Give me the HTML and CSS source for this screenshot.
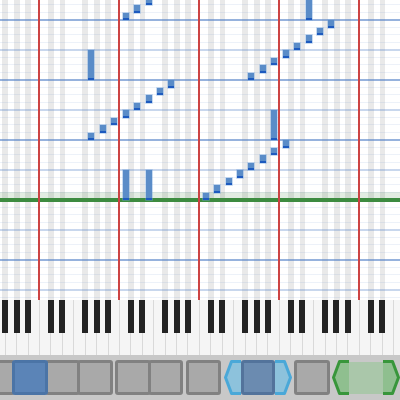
FILE: index.html
```html
<!DOCTYPE html>
<html lang="en">
<head>
  <meta charset="UTF-8">
  <meta name="viewport" content="width=device-width, initial-scale=1.0">
  <title>Piano Roll</title>
  <link rel="stylesheet" href="styles.css">
</head>
<body>
  <div class="roll" id="roll">
    <div class="playhead"></div>
  </div>

  <div class="keyboard">
    <div class="keys" id="keys"></div>
  </div>

  <div class="toolbar">
    <div class="tools">
      <div class="group">
        <div class="btn"></div>
        <div class="btn active"></div>
        <div class="btn"></div>
        <div class="btn"></div>
      </div>
      <div class="group">
        <div class="btn"></div>
        <div class="btn"></div>
      </div>
      <div class="group">
        <div class="btn"></div>
      </div>
      <div class="range blue">
        <svg class="handle" width="17" height="35" viewBox="0 0 17 35"><path d="M17 1.5H7.5L1.5 17.5L7.5 33.5H17"/></svg>
        <div class="btn selected"></div>
        <svg class="handle" width="17" height="35" viewBox="0 0 17 35"><path d="M0 1.5H9.5L15.5 17.5L9.5 33.5H0"/></svg>
      </div>
      <div class="group">
        <div class="btn"></div>
      </div>
      <div class="range green">
        <svg class="handle" width="17" height="35" viewBox="0 0 17 35"><path d="M17 1.5H7.5L1.5 17.5L7.5 33.5H17"/></svg>
        <div class="loop"></div>
        <svg class="handle" width="17" height="35" viewBox="0 0 17 35"><path d="M0 1.5H9.5L15.5 17.5L9.5 33.5H0"/></svg>
      </div>
    </div>
  </div>

  <script>
    const W = 80 / 7;   // white key width
    const C0 = 40;      // x of the first C on screen

    // keyboard: starts on the F below C0
    const keys = document.getElementById('keys');
    for (let j = -4; j < 32; j++) {
      const step = ((j % 7) + 7) % 7;
      const key = document.createElement('div');
      key.className = [0, 1, 3, 4, 5].includes(step) ? 'key sharp' : 'key';
      keys.appendChild(key);
    }

    // [white key from C0, top, length]
    const notes = [
      [7, 12.5], [8, 5], [9, -2.5],
      [4, 50, 30],
      [4, 132.5], [5, 125], [6, 117.5], [7, 110], [8, 102.5], [9, 95], [10, 87.5], [11, 80],
      [18, 72.5], [19, 65], [20, 57.5], [21, 50], [22, 42.5], [23, 35], [24, 27.5], [25, 20],
      [23, -10, 30],
      [20, 110, 30],
      [14, 192.5], [15, 185], [16, 177.5], [17, 170], [18, 162.5], [19, 155], [20, 147.5], [21, 140],
      [7, 170, 30], [9, 170, 30]
    ];

    const roll = document.getElementById('roll');
    notes.forEach(([k, top, len = 7.5]) => {
      const note = document.createElement('div');
      note.className = 'note';
      note.style.left = (C0 + k * W + 2.7) + 'px';
      note.style.top = top + 'px';
      note.style.height = len + 'px';
      roll.appendChild(note);
    });
  </script>
</body>
</html>
```

FILE: styles.css
```css
body {
  margin: 0;
  width: 400px;
  height: 400px;
  overflow: hidden;
  font-family: "Liberation Sans", sans-serif;
  background-color: #c8c8c8;
}

/* note grid */
.roll {
  position: relative;
  height: 300px;
  overflow: hidden;
  background-color: #fff;
  background-image:
    linear-gradient(to bottom,
      rgba(74, 122, 196, 0.58) 0 2px,
      transparent 2px 8px,
      rgba(74, 122, 196, 0.1) 8px 9px,
      transparent 9px 15.5px,
      rgba(74, 122, 196, 0.1) 15.5px 16.5px,
      transparent 16.5px 23px,
      rgba(74, 122, 196, 0.1) 23px 24px,
      transparent 24px 30px,
      rgba(74, 122, 196, 0.3) 30px 32px,
      transparent 32px 38px,
      rgba(74, 122, 196, 0.1) 38px 39px,
      transparent 39px 45.5px,
      rgba(74, 122, 196, 0.1) 45.5px 46.5px,
      transparent 46.5px 53px,
      rgba(74, 122, 196, 0.1) 53px 54px,
      transparent 54px),
    linear-gradient(to right,
      transparent 0 8.2px,
      rgba(0, 0, 0, 0.085) 8.2px 14px,
      transparent 14px 19.7px,
      rgba(0, 0, 0, 0.085) 19.7px 25.5px,
      transparent 25.5px 42.5px,
      rgba(0, 0, 0, 0.085) 42.5px 48.3px,
      transparent 48.3px 54px,
      rgba(0, 0, 0, 0.085) 54px 59.8px,
      transparent 59.8px 65.4px,
      rgba(0, 0, 0, 0.085) 65.4px 71.2px,
      transparent 71.2px);
  background-size: 100% 60px, 80px 100%;
  background-position: 0 19px, 40px 0;
}

/* octave lines on C */
.roll::after {
  content: '';
  position: absolute;
  top: 0;
  right: 0;
  bottom: 0;
  left: 0;
  background-image: linear-gradient(to right, #cc4444 0 2.5px, transparent 2.5px);
  background-size: 80px 100%;
  background-position: 38px 0;
}

.playhead {
  position: absolute;
  left: 0;
  right: 0;
  top: 192px;
  height: 5.5px;
  background-color: rgba(60, 130, 60, 0.15);
  border-bottom: 4.5px solid #3d8b40;
}

.note {
  position: absolute;
  width: 6px;
  box-sizing: border-box;
  background-color: #5a8cc8;
  border-bottom: 2px solid #1d5abf;
  box-shadow: 0 0 0 0.75px rgba(110, 160, 220, 0.5);
}

/* keyboard */
.keyboard {
  height: 55px;
  overflow: hidden;
  background-color: #f5f5f5;
}

.keys {
  display: flex;
  height: 100%;
  margin-left: -5.714px;
}

.key {
  position: relative;
  flex: 0 0 11.4286px;
  box-sizing: border-box;
  border-right: 1px solid #d9d9d9;
}

.key.sharp::after {
  content: '';
  position: absolute;
  z-index: 1;
  top: 0;
  right: -3.5px;
  width: 6px;
  height: 33px;
  background-color: #232323;
}

/* toolbar */
.toolbar {
  height: 45px;
  overflow: hidden;
  box-sizing: border-box;
  padding-top: 5px;
  background-color: #c8c8c8;
}

.tools {
  display: flex;
  gap: 2.5px;
  margin-left: -20.5px;
}

.group {
  display: flex;
}

.btn {
  flex: 0 0 35.5px;
  height: 35px;
  box-sizing: border-box;
  border: 3px solid #818181;
  border-radius: 3px;
  background-color: #a9a9a9;
}

.btn + .btn {
  margin-left: -3px;
}

.btn.active {
  position: relative;
  border-color: #4b74a6;
  background-color: #5b84b7;
}

.range {
  display: flex;
}

.handle {
  display: block;
  flex: 0 0 17px;
}

.handle path {
  stroke-width: 3;
  stroke-linejoin: round;
}

.blue .handle path {
  stroke: #4aa8d8;
  fill: #8dc2dc;
}

.btn.selected {
  flex: 0 0 34px;
  border-color: #53739b;
  background-color: #6b8bb0;
}

.green .handle path {
  stroke: #38963b;
  fill: #8fbf8f;
}

.loop {
  flex: 0 0 34px;
  height: 32px;
  margin-top: 1.5px;
  background-color: #aac7aa;
}
```
